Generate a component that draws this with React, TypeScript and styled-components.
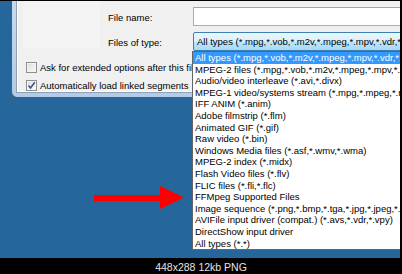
import styled, { createGlobalStyle } from "styled-components";

const GlobalStyle = createGlobalStyle`
  html, body {
    margin: 0;
    padding: 0;
    background: #000;
  }
`;

const fileTypes = [
  "All types (*.mpg,*.vob,*.m2v,*.mpeg,*.mpv,*.vdr,*.vro,*.avi,*.divx)",
  "MPEG-2 files (*.mpg,*.vob,*.m2v,*.mpeg,*.mpv,*.vdr,*.vro)",
  "Audio/video interleave (*.avi,*.divx)",
  "MPEG-1 video/systems stream (*.mpg,*.mpeg,*.mpv)",
  "IFF ANIM (*.anim)",
  "Adobe filmstrip (*.flm)",
  "Animated GIF (*.gif)",
  "Raw video (*.bin)",
  "Windows Media files (*.asf,*.wmv,*.wma)",
  "MPEG-2 index (*.midx)",
  "Flash Video files (*.flv)",
  "FLIC files (*.fli,*.flc)",
  "FFMpeg Supported Files",
  "Image sequence (*.png,*.bmp,*.tga,*.jpg,*.jpeg,*.iff)",
  "AVIFile input driver (compat.) (*.avs,*.vdr,*.vpy)",
  "DirectShow input driver",
  "All types (*.*)",
];

export default function App() {
  return (
    <>
      <GlobalStyle />
      <Frame>
        <Screen>
          <Dialog>
            <Content>
              <TopSection>
                <Preview />
                <FieldGrid>
                  <FieldLabel>File name:</FieldLabel>
                  <TextInput />
                  <FieldLabel>Files of type:</FieldLabel>
                  <ComboWrap>
                    <Combo>All types (*.mpg,*.vob,*.m2v,*.mpeg,*.mpv,*.vdr,*.vro,*.avi)</Combo>
                    <DropList>
                      {fileTypes.map((t, i) => (
                        <DropItem key={i} $selected={i === 0}>
                          {t}
                        </DropItem>
                      ))}
                    </DropList>
                  </ComboWrap>
                </FieldGrid>
              </TopSection>
              <Checks>
                <CheckRow>
                  <CheckBox />
                  <CheckLabel>Ask for extended options after this file</CheckLabel>
                </CheckRow>
                <CheckRow>
                  <CheckBox $checked>
                    <svg width="9" height="9" viewBox="0 0 9 9">
                      <path d="M1.5 4.5 L3.5 7 L7.8 1.2" fill="none" stroke="#3b4f8a" strokeWidth="1.5" />
                    </svg>
                  </CheckBox>
                  <CheckLabel>Automatically load linked segments</CheckLabel>
                </CheckRow>
              </Checks>
            </Content>
          </Dialog>
          <Arrow width="92" height="28" viewBox="0 0 92 28">
            <rect x="0" y="11" width="67" height="6" fill="#f00" />
            <polygon points="66,2 90,13.5 66,25" fill="#f00" />
          </Arrow>
        </Screen>
        <Caption>448x288 12kb PNG</Caption>
      </Frame>
    </>
  );
}

const Frame = styled.div`
  width: 402px;
  height: 274px;
  background: #000;
  display: flex;
  flex-direction: column;
  box-sizing: border-box;
  padding-top: 1px;
  font-family: "Liberation Sans", Arial, sans-serif;
`;

const Screen = styled.div`
  position: relative;
  width: 400px;
  height: 257px;
  background: #25679a;
  overflow: hidden;
  flex-shrink: 0;
`;

const Dialog = styled.div`
  margin-left: 11px;
  width: 430px;
  box-sizing: border-box;
  border: 1px solid #4c5b6b;
  border-top: none;
  border-right: none;
  border-bottom-left-radius: 6px;
  background: linear-gradient(#c6d9ee, #b3cbe6);
  padding: 0 0 4px 4px;
`;

const Content = styled.div`
  height: 92px;
  box-sizing: border-box;
  border-left: 1px solid #8da0b6;
  border-bottom: 1px solid #8da0b6;
  box-shadow: inset 1px -1px 0 #fff;
  background: #f0f0f0;
  padding-left: 6px;
  display: flex;
  flex-direction: column;
`;

const TopSection = styled.div`
  display: flex;
  height: 50px;
`;

const Preview = styled.div`
  width: 77px;
  height: 47px;
  background: #f4f4f4;
`;

const FieldGrid = styled.div`
  margin-left: 8px;
  padding-top: 6px;
  display: grid;
  grid-template-columns: 85px 240px;
  grid-auto-rows: 19px;
  row-gap: 6px;
`;

const FieldLabel = styled.div`
  font-size: 9.5px;
  color: #000;
  display: flex;
  align-items: center;
  padding-top: 1px;
`;

const TextInput = styled.div`
  box-sizing: border-box;
  border: 1px solid #abadb3;
  border-top-color: #a3a6ad;
  background: #fff;
`;

const ComboWrap = styled.div`
  position: relative;
`;

const Combo = styled.div`
  box-sizing: border-box;
  height: 19px;
  border: 1px solid #3c7fb1;
  border-radius: 2px;
  background: linear-gradient(#eaf6fd 0%, #d9f0fc 50%, #bee6fd 52%, #a7d9f5 100%);
  font-size: 9.5px;
  color: #000;
  padding: 0 0 0 3px;
  display: flex;
  align-items: center;
  white-space: nowrap;
  overflow: hidden;
`;

const DropList = styled.div`
  position: absolute;
  top: 100%;
  left: -1px;
  width: 240px;
  box-sizing: border-box;
  border: 1px solid #646464;
  background: #fff;
  z-index: 2;
`;

const DropItem = styled.div<{ $selected?: boolean }>`
  height: 11.6px;
  line-height: 11.6px;
  font-size: 9.5px;
  padding-left: 2px;
  white-space: nowrap;
  overflow: hidden;
  color: ${(p) => (p.$selected ? "#fff" : "#000")};
  background: ${(p) => (p.$selected ? "#3399ff" : "transparent")};
`;

const Checks = styled.div`
  margin-top: 11px;
  padding-left: 3px;
  display: flex;
  flex-direction: column;
  gap: 7px;
`;

const CheckRow = styled.div`
  display: flex;
  align-items: center;
  gap: 3px;
  height: 11px;
`;

const CheckBox = styled.div<{ $checked?: boolean }>`
  width: 11px;
  height: 11px;
  box-sizing: border-box;
  border: 1px solid #8e8f8f;
  background: linear-gradient(135deg, #dcdcdc, #fbfbfb);
  box-shadow: inset 0 0 0 1px #f4f4f4;
  display: flex;
  align-items: center;
  justify-content: center;
  flex-shrink: 0;
`;

const CheckLabel = styled.span`
  font-size: 9.5px;
  color: #000;
  white-space: nowrap;
`;

const Arrow = styled.svg`
  position: absolute;
  left: 94px;
  top: 183px;
`;

const Caption = styled.div`
  flex: 1;
  display: flex;
  align-items: center;
  justify-content: center;
  color: #e4e4e4;
  font-size: 10.5px;
  padding-top: 1px;
`;
